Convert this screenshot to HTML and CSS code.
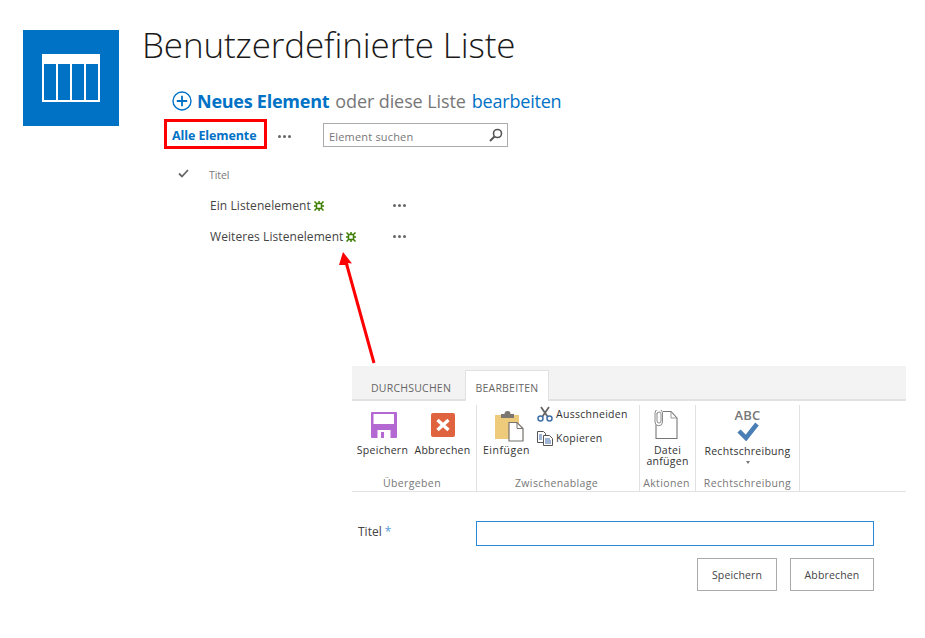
FILE: index.html
```html
<!DOCTYPE html>
<html lang="de">
<head>
<meta charset="utf-8">
<title>Benutzerdefinierte Liste</title>
<link rel="stylesheet" href="styles.css">
</head>
<body>
<div class="page">
  <section class="top">
    <div class="logo">
      <svg width="58" height="48" viewBox="0 0 58 48"><path fill="#fff" d="M0 0h58v48H0z"/><path fill="#0072c6" d="M2 10h12v36H2zM16 10h12v36H16zM30 10h12v36H30zM44 10h12v36H44z"/></svg>
    </div>
    <div class="main">
      <h1 class="title">Benutzerdefinierte Liste</h1>
      <div class="callout">
        <svg class="plus" width="20" height="20" viewBox="0 0 20 20"><circle cx="10" cy="10" r="9" fill="none" stroke="#0072c6" stroke-width="1.4"/><path d="M10 4.8v10.400M4.800 10h10.400" stroke="#0072c6" stroke-width="1.800"/></svg>
        <a class="new">Neues Element</a>
        <span class="muted">oder diese Liste</span>
        <a class="edit">bearbeiten</a>
      </div>
      <div class="viewbar">
        <a class="view">Alle Elemente</a>
        <span class="dots viewdots"><i></i><i></i><i></i></span>
        <div class="search">
          <span>Element suchen</span>
          <svg width="14" height="14" viewBox="0 0 14 14"><circle cx="8.500" cy="5.500" r="4" fill="none" stroke="#555" stroke-width="1.600"/><path d="M5.500 8.500L1 13" stroke="#555" stroke-width="2"/></svg>
        </div>
      </div>
      <div class="list">
        <div class="listhead">
          <svg class="check" width="11" height="9" viewBox="0 0 11 9"><path d="M1 4.500L4 7.500L10 1" fill="none" stroke="#666" stroke-width="1.800"/></svg>
          <span>Titel</span>
        </div>
        <div class="row">
          <div class="cell"><span>Ein Listenelement</span><svg class="new-mark" width="10" height="10" viewBox="0 0 10 10"><path d="M2.500 2.500h5v5h-5zM.5 .5l2 2M9.500 .5l-2 2M.5 9.500l2-2M9.500 9.500l-2-2M5 0v2.500M5 7.500V10M0 5h2.500M7.500 5H10" fill="none" stroke="#3a7d00" stroke-width="1.500"/></svg></div>
          <span class="dots"><i></i><i></i><i></i></span>
        </div>
        <div class="row">
          <div class="cell"><span>Weiteres Listenelement</span><svg class="new-mark" width="10" height="10" viewBox="0 0 10 10"><path d="M2.500 2.500h5v5h-5zM.5 .5l2 2M9.500 .5l-2 2M.5 9.500l2-2M9.500 9.500l-2-2M5 0v2.500M5 7.500V10M0 5h2.500M7.500 5H10" fill="none" stroke="#3a7d00" stroke-width="1.500"/></svg></div>
          <span class="dots"><i></i><i></i><i></i></span>
        </div>
      </div>
    </div>
  </section>

  <svg class="arrow" width="50" height="125" viewBox="0 0 50 125"><path d="M33 113L5 12" stroke="#f00" stroke-width="3" fill="none"/><path d="M2 2L11 13.500L6.500 13L7.500 15L2 15L-2 15Z" fill="#f00"/></svg>

  <section class="editor">
    <div class="tabs">
      <span class="tab">DURCHSUCHEN</span>
      <span class="tab active">BEARBEITEN</span>
    </div>
    <div class="ribbon">
      <div class="group g1">
        <div class="tools">
          <div class="tool t-save">
            <svg width="26" height="26" viewBox="0 0 26 26"><path fill="#b468d2" d="M1 0h24a1 1 0 0 1 1 1v24a1 1 0 0 1-1 1H1a1 1 0 0 1-1-1V1a1 1 0 0 1 1-1z"/><path fill="#fff" d="M2.500 2h20.500v10H2.500zM6.500 18h13v8h-13z"/><path fill="#b468d2" d="M10 20h3v6h-3z"/></svg>
            <span>Speichern</span>
          </div>
          <div class="tool t-cancel">
            <svg width="24" height="24" viewBox="0 0 24 24"><rect width="24" height="24" rx="2" fill="#e0633f"/><path d="M6.500 7l11 10M17.500 7l-11 10" stroke="#fff" stroke-width="3.400"/></svg>
            <span>Abbrechen</span>
          </div>
        </div>
        <div class="grouplabel gl1">Übergeben</div>
      </div>
      <div class="group g2">
        <div class="tools">
          <div class="tool t-paste">
            <svg width="29" height="31" viewBox="0 0 29 31"><path fill="#edcb7b" d="M0 4h24v24H0z"/><path fill="#7b7670" d="M6 3h3.500a3 3 0 0 1 6 0H19v4H6z"/><path d="M14 11.500h8l6 6V30H14z" fill="#fff" stroke="#77726c" stroke-width="1.200"/><path d="M22 11.500v6h6" fill="none" stroke="#77726c"/></svg>
            <span>Einfügen</span>
          </div>
          <div class="smalltools">
            <div class="smalltool">
              <svg width="16" height="16" viewBox="0 0 16 16"><path d="M4 1l6.500 9.500M12 1L5.500 10.500" stroke="#666" stroke-width="1.800"/><circle cx="3.500" cy="12.500" r="2.500" fill="none" stroke="#3f6fa8" stroke-width="1.500"/><circle cx="12.500" cy="12.500" r="2.500" fill="none" stroke="#3f6fa8" stroke-width="1.500"/></svg>
              <span>Ausschneiden</span>
            </div>
            <div class="smalltool">
              <svg width="16" height="15" viewBox="0 0 16 15"><path d="M.5.500h6l2 2v9h-8z" fill="#fff" stroke="#555"/><path d="M6.500 4.500h6l3 3v7h-9z" fill="#fff" stroke="#555"/><path d="M8 8h5M8 10h6M8 12h6M2 4h3M2 6h3M2 8h3" stroke="#3f6fa8"/></svg>
              <span>Kopieren</span>
            </div>
          </div>
        </div>
        <div class="grouplabel gl2">Zwischenablage</div>
      </div>
      <div class="group g3">
        <div class="tools">
          <div class="tool t-attach">
            <svg width="24" height="30" viewBox="0 0 24 30"><path d="M9 1.500h8l6 6.500V28.500H2V15" fill="none" stroke="#777" stroke-width="1.100"/><path d="M17 1.500V8h6" fill="none" stroke="#999"/><path d="M3 4a2 2 0 0 1 4 0V11a2 2 0 0 1-4 0V3M1 3a3.500 3.500 0 0 1 7.500 0v9a3.500 3.500 0 0 1-7.500 0z" fill="none" stroke="#8a8a8a" stroke-width="1"/></svg>
            <span>Datei<br>anfügen</span>
          </div>
        </div>
        <div class="grouplabel gl3">Aktionen</div>
      </div>
      <div class="group g4">
        <div class="tools">
          <div class="tool t-spell">
            <div class="abc">ABC</div>
            <svg width="22" height="19" viewBox="0 0 22 19"><path d="M2 9l7 7L20 2" fill="none" stroke="#4a7fb5" stroke-width="4.500"/></svg>
            <span>Rechtschreibung</span>
            <b class="caret"></b>
          </div>
        </div>
        <div class="grouplabel">Rechtschreibung</div>
      </div>
    </div>
    <div class="field">
      <label class="fieldlabel">Titel <em>*</em></label>
      <div class="input"></div>
    </div>
    <div class="actions">
      <span class="btn b1">Speichern</span>
      <span class="btn b2">Abbrechen</span>
    </div>
  </section>
</div>
</body>
</html>
```
FILE: styles.css
```css
* { box-sizing: border-box; }
html, body { margin: 0; padding: 0; background: #fff; }
body { font-family: "Open Sans", "Noto Sans", sans-serif; color: #444; }
.page { position: relative; width: 925px; height: 638px; overflow: hidden; padding-top: 30px; }
a { color: #0072c6; }

.top { display: flex; align-items: flex-start; padding-left: 23px; height: 336px; }
.logo { width: 96px; height: 96px; background: #0072c6; display: flex; align-items: center; justify-content: center; flex: none; }
.main { margin-left: 24px; }
.title { margin: -7px 0 0 -1px; font-size: 35px; line-height: 44px; font-weight: 300; color: #1a1a1a; white-space: nowrap; letter-spacing: -.12px; }

.callout { display: flex; align-items: center; margin: 22px 0 0 29px; height: 24px; font-size: 18px; color: #777; white-space: nowrap; letter-spacing: -.25px; }
.plus { margin-right: 5px; }
.new { font-weight: 700; margin-right: 6px; }
.muted { margin-right: 6px; letter-spacing: -.1px; }
.edit { letter-spacing: -.2px; }

.viewbar { display: flex; align-items: center; margin: 6px 0 0 21px; height: 30px; }
.view { width: 103px; height: 30px; border: 3px solid #f00; font-size: 12.500px; font-weight: 700; line-height: 27px; padding-left: 5px; white-space: nowrap; letter-spacing: -.1px; }
.dots { display: inline-flex; gap: 2px; }
.dots i { width: 3px; height: 3px; border-radius: 50%; background: #666; display: block; }
.viewdots { margin-left: 11px; width: 45px; margin-top: 4px; }
.search { width: 185px; height: 24px; margin-top: 2px; border: 1px solid #ababab; display: flex; align-items: center; justify-content: space-between; padding: 2px 4px 0 5px; font-size: 11px; color: #777; letter-spacing: .18px; }
.search svg { margin-top: -2px; }

.list { margin: 16px 0 0 35px; }
.listhead { display: flex; align-items: center; height: 19px; font-size: 10.500px; color: #777; letter-spacing: -.05px; }
.check { margin-right: 20px; margin-top: -2px; }
.row { display: flex; align-items: center; height: 31px; font-size: 12px; color: #444; white-space: nowrap; letter-spacing: .08px; }
.cell { width: 215px; padding-left: 32px; display: flex; align-items: center; gap: 3px; }
.list .listhead + .row { margin-top: 6px; }
.new-mark { margin-top: 1px; }

.arrow { position: absolute; left: 341px; top: 250px; overflow: visible; }

.editor { margin-left: 352px; width: 554px; }
.tabs { height: 35px; background: #f3f3f3; border-bottom: 2px solid #e1e1e1; display: flex; align-items: flex-end; padding-left: 19px; font-size: 10.500px; color: #666; }
.tab { height: 29px; line-height: 37px; white-space: nowrap; letter-spacing: .22px; }
.tab:first-child { width: 94px; }
.tab.active { width: 84px; margin-bottom: -2px; background: #fff; border: 1px solid #e1e1e1; border-bottom: 0; text-align: center; line-height: 35px; height: 31px; }

.ribbon { display: flex; height: 91px; border-bottom: 1px solid #e1e1e1; }
.group { position: relative; display: flex; flex-direction: column; border-right: 1px solid #e1e1e1; margin-top: 4px; height: 86px; }
.g1 { width: 125px; } .g2 { width: 163px; } .g3 { width: 56px; } .g4 { width: 104px; }
.tools { flex: 1; display: flex; }
.grouplabel { height: 16px; line-height: 16px; text-align: center; font-size: 10.500px; color: #777; white-space: nowrap; letter-spacing: .36px; }
.gl1 { padding-right: 4px; }
.gl2 { padding-right: 3px; }
.gl3 { padding-right: 2px; }
.tool { display: flex; flex-direction: column; align-items: center; font-size: 10.500px; line-height: 11px; color: #333; white-space: nowrap; text-align: center; letter-spacing: .28px; }
.tool span { display: block; }
.t-save { width: 61px; padding-top: 7px; }
.t-save svg { margin-bottom: 7px; margin-left: 3px; }
.t-cancel { width: 59px; padding-top: 8px; }
.t-cancel svg { margin-bottom: 8px; }
.t-paste { width: 60px; padding: 6px 1px 0 0; letter-spacing: .5px; }
.t-paste svg { margin-bottom: 3px; margin-left: 5px; }
.smalltools { display: flex; flex-direction: column; gap: 8px; padding-top: 1px; }
.smalltool { display: flex; align-items: center; gap: 3px; height: 16px; font-size: 10.500px; color: #333; white-space: nowrap; letter-spacing: .28px; }
.t-attach { width: 55px; }
.t-attach svg { margin: 5px 0 5px -3px; }
.t-spell { width: 103px; padding-top: 3px; }
.abc { font-size: 13px; line-height: 15px; font-weight: 600; color: #777; }
.t-spell svg { margin: -1px 0 5px; }
.caret { display: block; width: 0; height: 0; margin-top: 4px; border-left: 2.500px solid transparent; border-right: 2.500px solid transparent; border-top: 3px solid #777; }

.field { display: flex; align-items: center; margin-top: 28px; height: 26px; }
.fieldlabel { width: 124px; padding: 0 0 4px 6px; font-size: 12px; color: #444; letter-spacing: 0; }
.fieldlabel em { color: #5b9bd5; font-style: normal; }
.input { width: 398px; height: 25px; border: 1px solid #2b88d8; }
.actions { display: flex; justify-content: flex-end; gap: 13px; margin-top: 12px; width: 522px; }
.btn { height: 33px; border: 1px solid #ababab; line-height: 33px; text-align: center; font-size: 10.500px; color: #444; letter-spacing: .15px; }
.b1 { width: 80px; } .b2 { width: 84px; }
```
